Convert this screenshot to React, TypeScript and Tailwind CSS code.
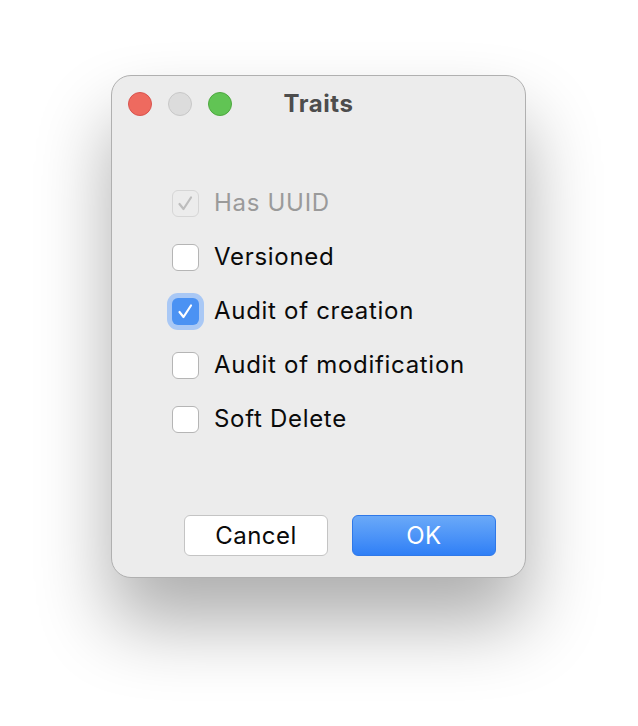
import React, { useState } from 'react';

type Trait = {
  label: string;
  checked: boolean;
  disabled?: boolean;
  focused?: boolean;
};

const initialTraits: Trait[] = [
  { label: 'Has UUID', checked: true, disabled: true },
  { label: 'Versioned', checked: false },
  { label: 'Audit of creation', checked: true, focused: true },
  { label: 'Audit of modification', checked: false },
  { label: 'Soft Delete', checked: false },
];

const Check: React.FC<{ color: string }> = ({ color }) => (
  <svg width="19" height="19" viewBox="0 0 19 19" fill="none">
    <path d="M3.5 10 L7.5 15 L15 3.5" stroke={color} strokeWidth="2.2" strokeLinecap="round" strokeLinejoin="round" />
  </svg>
);

const TraitRow: React.FC<{ trait: Trait; onToggle: () => void }> = ({ trait, onToggle }) => {
  let box = 'border border-[#b5b5b5] bg-white';
  if (trait.disabled) box = 'border border-[#d6d6d6] bg-[#ececec]';
  else if (trait.checked) box = 'bg-[#4b92f3]';

  return (
    <button
      onClick={trait.disabled ? undefined : onToggle}
      className="flex h-[54px] items-center gap-[15px] text-left"
    >
      <span
        className={`flex h-[27px] w-[27px] items-center justify-center rounded-[6px] ${box} ${
          trait.focused ? 'ring-[5px] ring-[#a9c8f5]' : ''
        }`}
      >
        {trait.checked && <Check color={trait.disabled ? '#bdbdbd' : '#ffffff'} />}
      </span>
      <span
        className={`text-[24px] tracking-[0.7px] ${trait.disabled ? 'text-[#9a9a9a]' : 'text-[#0a0a0a]'}`}
      >
        {trait.label}
      </span>
    </button>
  );
};

export default function App() {
  const [traits, setTraits] = useState(initialTraits);

  const toggle = (i: number) =>
    setTraits((t) => t.map((x, j) => (j === i ? { ...x, checked: !x.checked } : x)));

  return (
    <div
      className="min-h-[726px] w-[638px] bg-white pl-[111px] pt-[75px]"
      style={{ fontFamily: 'Inter, "Liberation Sans", sans-serif' }}
    >
      {/* Window */}
      <div className="flex h-[503px] w-[415px] flex-col rounded-[20px] border border-[#b0b0b0] bg-[#ececec] shadow-[0_45px_75px_rgba(0,0,0,0.32)]">
        {/* Title bar */}
        <div className="relative flex h-[56px] items-center justify-center">
          <div className="absolute left-[16px] top-[16px] flex gap-4">
            <span className="h-6 w-6 rounded-full border border-[#d9534e] bg-[#ee6a5f]" />
            <span className="h-6 w-6 rounded-full border border-[#c8c8c8] bg-[#dcdcdc]" />
            <span className="h-6 w-6 rounded-full border border-[#4ea83f] bg-[#61c454]" />
          </div>
          <span className="text-[24px] font-bold tracking-[0.6px] text-[#4d4d4d]">Traits</span>
        </div>

        {/* Options */}
        <div className="flex flex-col pl-[60px] pt-[44px]">
          {traits.map((t, i) => (
            <TraitRow key={t.label} trait={t} onToggle={() => toggle(i)} />
          ))}
        </div>

        {/* Footer */}
        <div className="mt-auto flex gap-6 pb-[21px] pl-[72px]">
          <button className="h-[41px] w-[144px] rounded-[6px] border border-[#c4c4c4] bg-white text-[24px] tracking-[0.5px] text-[#0a0a0a]">
            Cancel
          </button>
          <button className="h-[41px] w-[144px] rounded-[6px] border border-[#2f78e8] bg-gradient-to-b from-[#6aa9f8] to-[#2f7ff6] text-[24px] tracking-[0.5px] text-white">
            OK
          </button>
        </div>
      </div>
    </div>
  );
}
